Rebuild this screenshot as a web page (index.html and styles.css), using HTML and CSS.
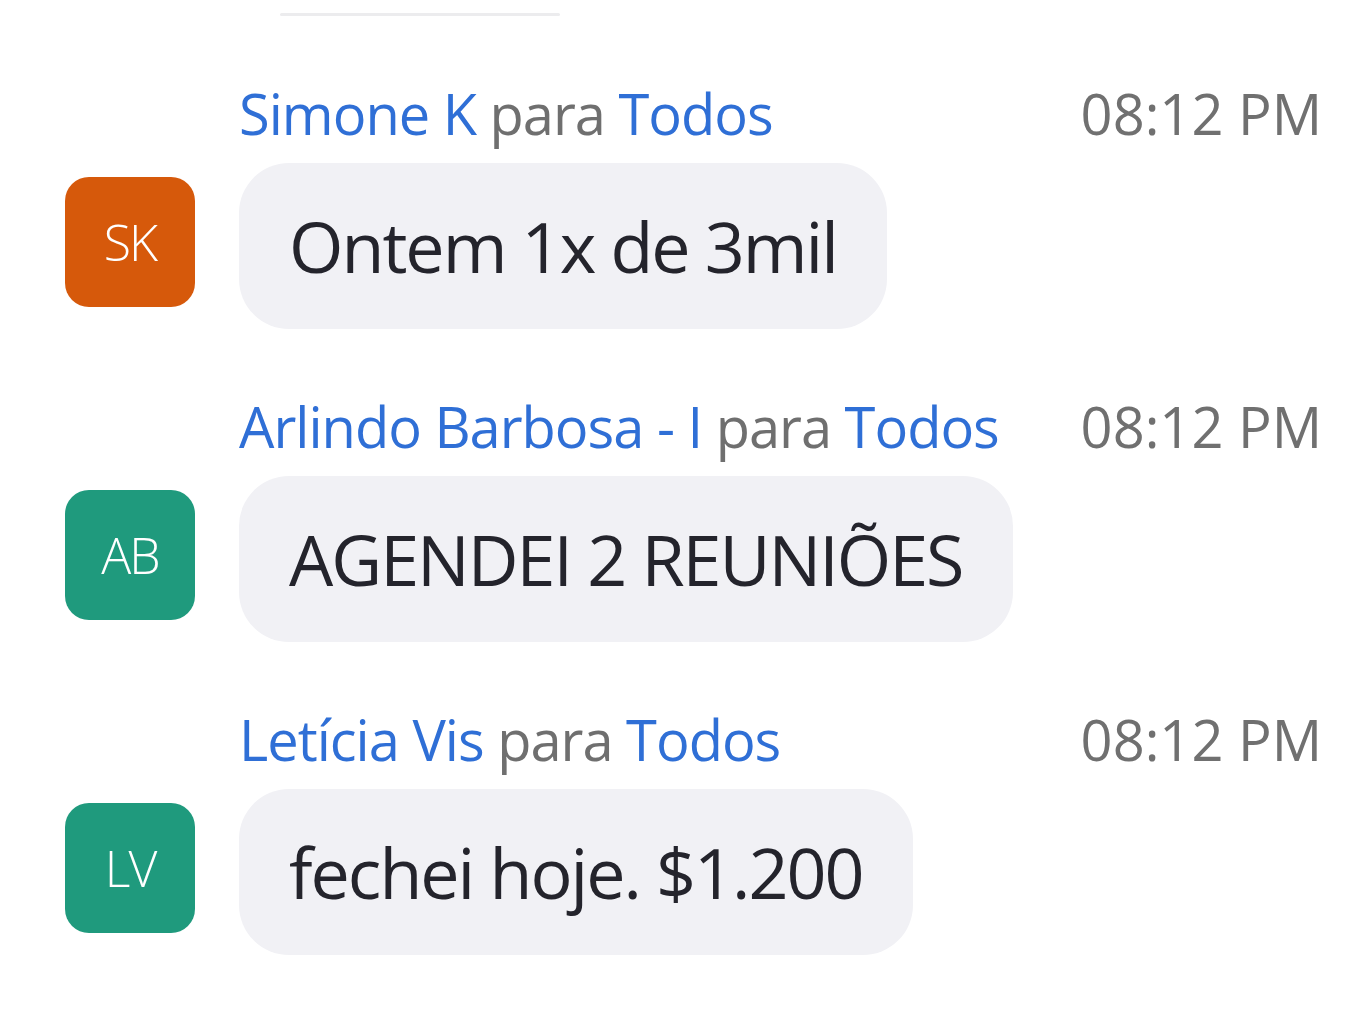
FILE: index.html
```html
<!DOCTYPE html>
<html lang="pt">
<head>
<meta charset="UTF-8" />
<title>Chat</title>
<link rel="stylesheet" href="styles.css">
</head>
<body>
  <div class="chat">
    <div class="prev-edge"></div>

    <div class="msg">
      <div class="msg-head">
        <div class="msg-from">
          <span class="sender">Simone K</span> <span class="to">para</span> <span class="sender">Todos</span>
        </div>
        <div class="msg-time">08:12 PM</div>
      </div>
      <div class="avatar orange">SK</div>
      <div class="bubble">Ontem 1x de 3mil</div>
    </div>

    <div class="msg">
      <div class="msg-head">
        <div class="msg-from">
          <span class="sender">Arlindo Barbosa - I</span> <span class="to">para</span> <span class="sender">Todos</span>
        </div>
        <div class="msg-time">08:12 PM</div>
      </div>
      <div class="avatar teal">AB</div>
      <div class="bubble">AGENDEI 2 REUNIÕES</div>
    </div>

    <div class="msg">
      <div class="msg-head">
        <div class="msg-from">
          <span class="sender">Letícia Vis</span> <span class="to">para</span> <span class="sender">Todos</span>
        </div>
        <div class="msg-time">08:12 PM</div>
      </div>
      <div class="avatar teal">LV</div>
      <div class="bubble">fechei hoje. $1.200</div>
    </div>
  </div>
</body>
</html>
```

FILE: styles.css
```css
body {
  margin: 0;
  background: #fff;
  font-family: "Open Sans", "Noto Sans", sans-serif;
}
.chat {
  padding: 13px 37px 0 65px;
}
.prev-edge {
  width: 280px;
  height: 3px;
  margin-left: 215px;
  background: #ececee;
  border-radius: 2px;
}
.msg {
  display: grid;
  grid-template-columns: 130px 1fr;
  column-gap: 44px;
  margin-top: 64px;
}
.msg + .msg {
  margin-top: 64px;
}
.msg-head {
  grid-column: 2;
  display: flex;
  justify-content: space-between;
  font-size: 56px;
  line-height: 66px;
  white-space: nowrap;
  letter-spacing: -1px;
}
.sender {
  color: #2f6fd6;
}
.to {
  color: #6f6f6f;
}
.msg-time {
  color: #707070;
  padding-left: 40px;
  letter-spacing: 0;
}
.avatar {
  grid-column: 1;
  align-self: center;
  width: 130px;
  height: 130px;
  margin-top: 9px;
  border-radius: 24px;
  color: #fff;
  font-size: 50px;
  font-weight: 300;
  display: flex;
  align-items: center;
  justify-content: center;
  letter-spacing: -2px;
}
.orange {
  background: #d6590b;
}
.teal {
  background: #1f9a7d;
}
.bubble {
  grid-column: 2;
  justify-self: start;
  margin-top: 17px;
  background: #f1f1f5;
  color: #24242c;
  border-radius: 50px;
  padding: 0 50px;
  height: 166px;
  display: flex;
  align-items: center;
  font-size: 70px;
  letter-spacing: -2px;
  white-space: nowrap;
}
```
